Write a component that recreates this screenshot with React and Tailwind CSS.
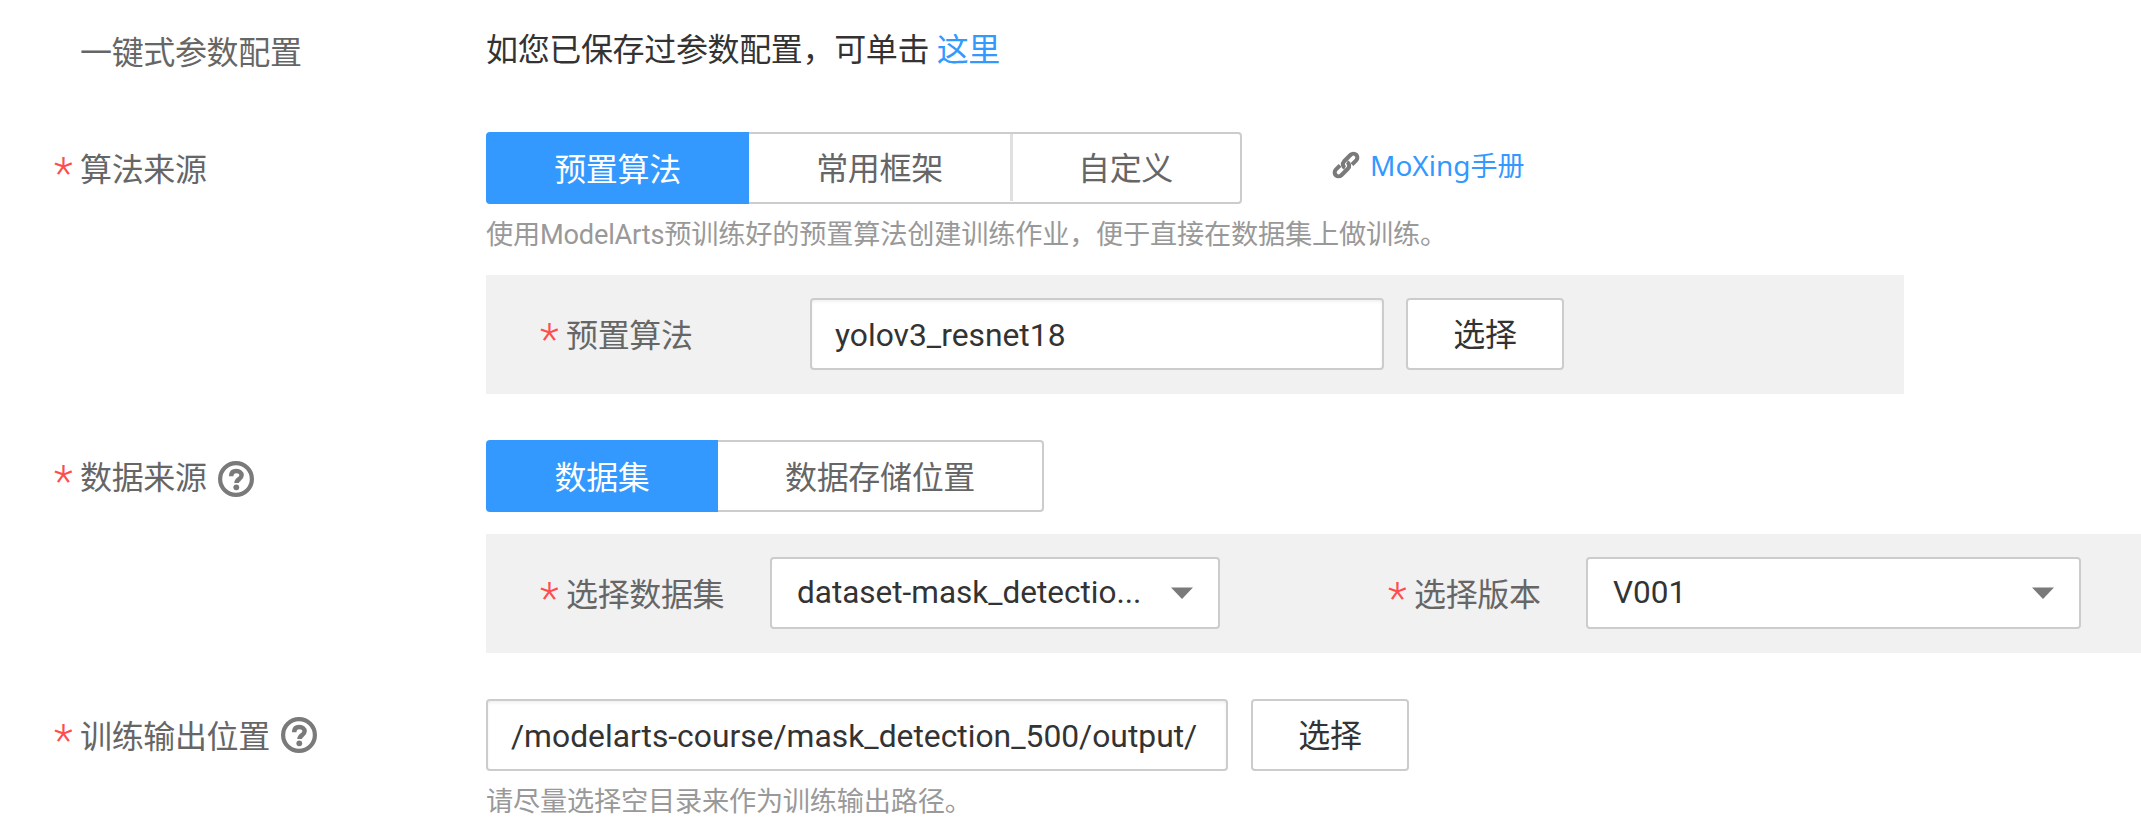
const Star = () => (
  <span className="flex h-9 w-[26px] shrink-0 items-start overflow-visible text-[44px] font-light leading-[44px] text-[#ff4c4c]">*</span>
);

const Label = ({ children, required = true, help = "" }) => (
  <div className="flex h-[72px] shrink-0 items-center whitespace-nowrap pt-1 text-[#666]">
    {required ? <Star /> : <span className="w-[26px]" />}
    <span>{children}</span>
    {help && <HelpIcon className={help} />}
  </div>
);

const HelpIcon = ({ className }) => (
  <svg className={`ml-[11px] size-9 ${className}`} viewBox="0 0 36 36" fill="none" stroke="#7a7a7a">
    <circle cx="18" cy="18" r="15.9" strokeWidth="4.2" />
    <path d="M13.200 15.200c0-3.400 2-5.200 5.200-5.200 3 0 5.200 1.700 5.200 4.300 0 3.900-5.100 3.700-5.100 7.700" strokeWidth="4.500" />
    <circle cx="18.300" cy="26.300" r="2.900" fill="#7a7a7a" stroke="none" />
  </svg>
);

const LinkIcon = () => (
  <svg className="h-[28px] w-[28px]" viewBox="-14 -14 28 28" fill="none" stroke="#7a7a7a" strokeWidth="4.100">
    <g transform="rotate(-45)">
      <path d="M4.500 3.900H10.500a3.900 3.900 0 0 0 0-7.800H1a4 4 0 0 0-3.700 5.200" />
      <path d="M-4.500-3.900H-10.500a3.900 3.900 0 0 0 0 7.800H-1a4 4 0 0 0 3.700-5.200" />
    </g>
  </svg>
);

const Caret = () => (
  <svg className="h-3 w-[22px] shrink-0" viewBox="0 0 22 12">
    <path d="M0 0.500H22L11 12Z" fill="#7a7a7a" />
  </svg>
);

const Input = ({ className, children }) => (
  <div className={`flex h-[72px] items-center whitespace-nowrap rounded-[4px] border-2 border-[#ccc] bg-white pl-[23px] pt-px text-[31.8px] tracking-normal text-[#333] shadow-[inset_0_2px_3px_rgba(0,0,0,0.06)] ${className}`}>
    {children}
  </div>
);

const Select = ({ className, children }) => (
  <div className={`flex h-[72px] items-center justify-between whitespace-nowrap rounded-[4px] border-2 border-[#ccc] bg-white pl-[25px] pr-[25px] text-[31.5px] tracking-normal text-[#333] ${className}`}>
    <span>{children}</span>
    <Caret />
  </div>
);

const Button = ({ children }) => (
  <button className="flex h-[72px] w-[158px] items-center justify-center rounded-[4px] border-2 border-[#ccc] bg-white pt-0.5 text-[#333]">
    {children}
  </button>
);

export default function App() {
  return (
    <div className="h-[833px] w-[2141px] overflow-hidden bg-white pl-[54px] font-['Roboto','Noto_Sans_CJK_SC',sans-serif] text-[32px] leading-[36px] tracking-[-0.35px]">
      <div className="flex h-[132px] pt-[15px]">
        <div className="w-[432px]">
          <Label required={false}>一键式参数配置</Label>
        </div>
        <div className="flex h-[70px] items-center whitespace-pre text-[#333]">
          如您已保存过参数配置，可单击 <a className="text-[#39f]">这里</a>
        </div>
      </div>

      <div className="flex h-[308px]">
        <div className="w-[432px]">
          <Label>算法来源</Label>
        </div>
        <div className="flex flex-col">
          <div className="flex items-center">
            <div className="flex h-[72px] text-[#666]">
              <div className="flex w-[263px] items-center justify-center rounded-l-[4px] bg-[#39f] pt-[3px] text-white">预置算法</div>
              <div className="flex w-[493px] rounded-r-[4px] border-y-2 border-r-2 border-[#ccc]">
                <div className="mb-px flex w-[264px] items-center justify-center border-r-[3px] border-[#e0e0e0] pt-[3px]">常用框架</div>
                <div className="flex flex-1 items-center justify-center pr-0.5 pt-0.5">自定义</div>
              </div>
            </div>
            <a className="ml-[90px] flex items-center gap-[10px] text-[27px] tracking-normal text-[#39f]">
              <span className="-mt-[7px]"><LinkIcon /></span>
              <span className="-mt-1"><span className="font-['Noto_Sans'] text-[28px]">MoXing</span>手册</span>
            </a>
          </div>
          <div className="flex h-[71px] items-center whitespace-nowrap pb-[9px] text-[27.2px] tracking-[-0.2px] text-[#999]">
            使用ModelArts预训练好的预置算法创建训练作业，便于直接在数据集上做训练。
          </div>
          <div className="flex h-[119px] w-[1418px] bg-[#f1f1f1] pl-[54px] pt-[23px]">
            <div className="w-[270px]">
              <Label>预置算法</Label>
            </div>
            <Input className="w-[574px]">yolov3_resnet18</Input>
            <div className="ml-[22px]"><Button>选择</Button></div>
          </div>
        </div>
      </div>

      <div className="flex h-[259px]">
        <div className="w-[432px]">
          <Label help="mt-0.5">数据来源</Label>
        </div>
        <div className="flex flex-1 flex-col">
          <div className="flex h-[72px] text-[#666]">
            <div className="flex w-[232px] items-center justify-center rounded-l-[4px] bg-[#39f] pt-[3px] text-white">数据集</div>
            <div className="flex w-[326px] items-center justify-center rounded-r-[4px] border-y-2 border-r-2 border-[#ccc] pt-[3px]">数据存储位置</div>
          </div>
          <div className="mt-[22px] flex h-[119px] bg-[#f1f1f1] pl-[54px] pt-[23px]">
            <div className="w-[230px]">
              <Label>选择数据集</Label>
            </div>
            <Select className="w-[450px]">dataset-mask_detectio...</Select>
            <div className="ml-[168px] w-[198px]">
              <Label>选择版本</Label>
            </div>
            <Select className="w-[495px]">V001</Select>
          </div>
        </div>
      </div>

      <div className="flex">
        <div className="w-[432px]">
          <Label help="-mt-1">训练输出位置</Label>
        </div>
        <div>
          <div className="flex gap-[23px]">
            <Input className="w-[742px]">/modelarts-course/mask_detection_500/output/</Input>
            <Button>选择</Button>
          </div>
          <div className="flex h-[62px] items-center text-[27.2px] tracking-[-0.2px] text-[#999]">请尽量选择空目录来作为训练输出路径。</div>
        </div>
      </div>
    </div>
  );
}
